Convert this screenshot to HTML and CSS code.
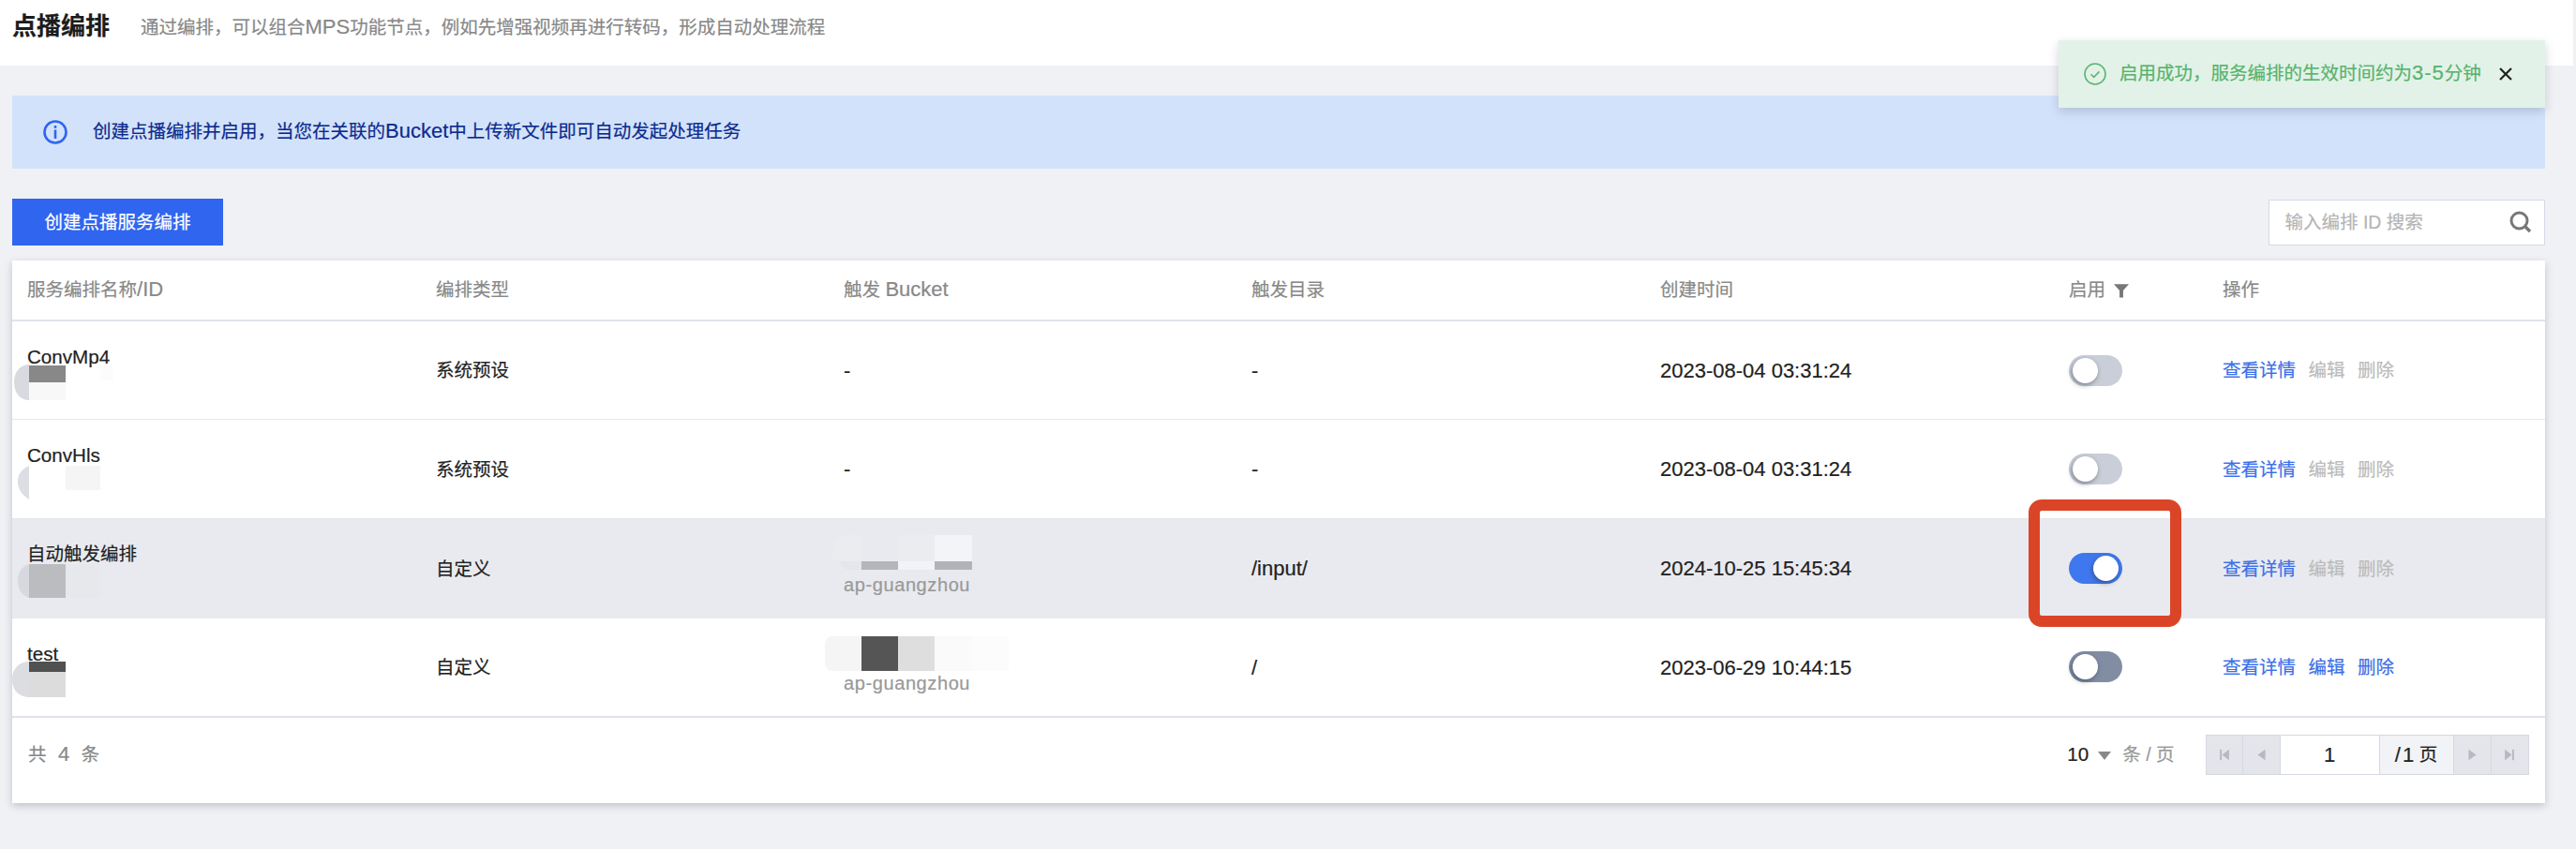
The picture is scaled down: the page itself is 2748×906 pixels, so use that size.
FILE: index.html
```html
<!DOCTYPE html>
<html lang="zh-CN">
<head>
<meta charset="utf-8">
<title>点播编排</title>
<link rel="stylesheet" href="styles.css">
</head>
<body>
<header class="page-head">
  <h1 class="page-title">点播编排</h1>
  <p class="page-desc">通过编排，可以组合<span class="lt">MPS</span>功能节点，例如先增强视频再进行转码，形成自动处理流程</p>
</header>
<div class="toast">
  <svg class="toast-icon" viewBox="0 0 24 24" width="24" height="24"><circle cx="12" cy="12" r="11" fill="none" stroke="#5cb672" stroke-width="1.6"/><path d="M7.5 12.2l3.2 3.2 5.8-6" fill="none" stroke="#5cb672" stroke-width="1.6"/></svg>
  <span class="toast-text">启用成功，服务编排的生效时间约为<span class="lt wide">3-5</span>分钟</span>
  <svg class="toast-close" viewBox="0 0 16 16" width="16" height="16"><path d="M2 2l12 12M14 2L2 14" stroke="#222" stroke-width="2.2" fill="none"/></svg>
</div>
<main class="content">
  <section class="banner">
    <svg viewBox="0 0 26 26" width="26" height="26"><circle cx="13" cy="13" r="11.5" fill="none" stroke="#2f65ef" stroke-width="2.6"/><rect x="11.7" y="6" width="2.6" height="2.8" fill="#2f65ef"/><rect x="11.7" y="10.5" width="2.6" height="9.5" fill="#2f65ef"/></svg>
    <span>创建点播编排并启用，当您在关联的<span class="lt">Bucket</span>中上传新文件即可自动发起处理任务</span>
  </section>
  <div class="toolbar">
    <button class="btn-primary" type="button">创建点播服务编排</button>
    <div class="search">
      <span class="search-ph">输入编排 ID 搜索</span>
      <svg viewBox="0 0 24 24" width="24" height="24"><circle cx="10.5" cy="10.5" r="8.5" fill="none" stroke="#777" stroke-width="3"/><path d="M16 16l6 6" stroke="#777" stroke-width="3.4" fill="none"/></svg>
    </div>
  </div>
  <section class="card">
    <table class="grid">
      <colgroup><col class="c1"><col class="c2"><col class="c3"><col class="c4"><col class="c5"><col class="c6"><col class="c7"></colgroup>
      <thead>
        <tr>
          <th>服务编排名称<span class="lt">/ID</span></th><th>编排类型</th><th>触发 <span class="lt">Bucket</span></th><th>触发目录</th><th>创建时间</th>
          <th>启用 <svg class="filter" viewBox="0 0 14 14" width="16" height="16"><path d="M0 1h14L8.7 7v6.5H5.3V7z" fill="#777"/></svg></th>
          <th>操作</th>
        </tr>
      </thead>
      <tbody>
        <tr>
          <td class="name"><div class="nm latin">ConvMp4</div>
            <svg class="mosaic m1" width="106" height="38"><path d="M16 0H14C4 2 0 10 0 19s4 17 14 19h2z" fill="#d8dae0"/><rect x="16" y="1" width="39" height="18" fill="#888"/><rect x="16" y="19" width="39" height="19" fill="#f8f8f8"/><rect x="92" y="0" width="14" height="17" fill="#fcfcfc"/></svg>
          </td>
          <td>系统预设</td><td class="lat">-</td><td class="lat">-</td><td class="lat">2023-08-04 03:31:24</td>
          <td><span class="sw off"><i></i></span></td>
          <td class="ops"><a>查看详情</a><a class="dis">编辑</a><a class="dis">删除</a></td>
        </tr>
        <tr>
          <td class="name"><div class="nm latin">ConvHls</div>
            <svg class="mosaic m2" width="88" height="36"><path d="M12 0C3 4 0 10 0 17s3 13 12 19z" fill="#dcdee3"/><rect x="51" y="0" width="37" height="26" fill="#f5f5f5"/></svg>
          </td>
          <td>系统预设</td><td class="lat">-</td><td class="lat">-</td><td class="lat">2023-08-04 03:31:24</td>
          <td><span class="sw off"><i></i></span></td>
          <td class="ops"><a>查看详情</a><a class="dis">编辑</a><a class="dis">删除</a></td>
        </tr>
        <tr class="hover">
          <td class="name"><div class="nm">自动触发编排</div>
            <svg class="mosaic m3" width="88" height="36"><path d="M12 0C3 3 0 10 0 18s3 15 12 18z" fill="#d8d9df"/><rect x="12" y="0" width="39" height="36" fill="#bbbcc0"/><rect x="51" y="0" width="37" height="36" fill="#e7e8ec"/></svg>
          </td>
          <td>自定义</td>
          <td class="bucket">
            <svg class="mosaic b3" width="149" height="37"><path d="M31 0H18C6 0 0 8 0 18c0 6 2 10 6 10h25z" fill="#ebecf0"/><path d="M6 28c3 6 7 9 13 9h12v-9z" fill="#e5e6ea"/><rect x="31" y="28" width="39" height="9" fill="#b4b5b9"/><rect x="70" y="0" width="39" height="28" fill="#ebecf0"/><rect x="70" y="28" width="39" height="9" fill="#f2f3f7"/><rect x="109" y="0" width="40" height="28" fill="#f3f4f8"/><rect x="109" y="28" width="40" height="9" fill="#b2b3b7"/></svg>
            <div class="region">ap-guangzhou</div>
          </td>
          <td class="lat">/input/</td><td class="lat">2024-10-25 15:45:34</td>
          <td><span class="sw on"><i></i></span></td>
          <td class="ops"><a>查看详情</a><a class="dis">编辑</a><a class="dis">删除</a></td>
        </tr>
        <tr>
          <td class="name"><div class="nm latin">test</div>
            <svg class="mosaic m4" width="58" height="38"><path d="M18 0H16C4 2 0 10 0 19s4 17 16 19h2z" fill="#dcdde0"/><rect x="18" y="0" width="39" height="11" fill="#505050"/><rect x="18" y="11" width="39" height="27" fill="#dcdcdc"/></svg>
          </td>
          <td>自定义</td>
          <td class="bucket">
            <svg class="mosaic b4" width="196" height="37"><path d="M39 0H10C3 0 0 3 0 10v17c0 7 3 10 10 10h29z" fill="#f5f5f5"/><rect x="39" y="0" width="39" height="37" fill="#555"/><rect x="78" y="0" width="39" height="37" fill="#dedede"/><rect x="117" y="0" width="40" height="37" fill="#fafafa"/><rect x="157" y="0" width="39" height="37" fill="#fcfcfc"/></svg>
            <div class="region">ap-guangzhou</div>
          </td>
          <td class="lat">/</td><td class="lat">2023-06-29 10:44:15</td>
          <td><span class="sw dark"><i></i></span></td>
          <td class="ops"><a>查看详情</a><a>编辑</a><a>删除</a></td>
        </tr>
      </tbody>
    </table>
    <footer class="foot">
      <span class="total">共 <span class="lt">4</span> 条</span>
      <div class="page-size"><b class="size-num">10</b><i class="caret"></i><span>条 / 页</span></div>
      <div class="pager">
        <span class="pg"><svg viewBox="0 0 12 16" width="10" height="13"><rect x="0" y="1" width="2.4" height="14" fill="#b6b9c0"/><path d="M12 1v14L3 8z" fill="#b6b9c0"/></svg></span>
        <span class="pg"><svg viewBox="0 0 10 16" width="9" height="13"><path d="M10 1v14L0 8z" fill="#b6b9c0"/></svg></span>
        <span class="pg-input lt">1</span>
        <span class="pg-total"><span class="lt slash">/ 1</span>&nbsp;页</span>
        <span class="pg"><svg viewBox="0 0 10 16" width="9" height="13"><path d="M0 1v14L10 8z" fill="#b6b9c0"/></svg></span>
        <span class="pg"><svg viewBox="0 0 12 16" width="10" height="13"><rect x="9.6" y="1" width="2.4" height="14" fill="#b6b9c0"/><path d="M0 1v14L9 8z" fill="#b6b9c0"/></svg></span>
      </div>
    </footer>
  </section>
</main>
<div class="callout"></div>
</body>
</html>
```
FILE: styles.css
```css
* { box-sizing: border-box; }
html, body { height: 100%; }
body {
  margin: 0;
  overflow: hidden;
  background: #f0f1f5;
  color: #222;
  font: 19.5px/1.2 "Liberation Sans", "Noto Sans CJK SC", sans-serif;
  -webkit-text-stroke: .2px;
  position: relative;
}
.lt { font-size: 22px; line-height: 1; }
.wide { letter-spacing: 1px; }
.slash { word-spacing: -4px; }
.page-head {
  height: 70px;
  margin-right: 3px;
  padding-left: 13px;
  background: #fff;
  display: flex;
  align-items: flex-start;
  gap: 33px;
}
.page-title { margin: 12px 0 0; font-size: 26px; line-height: 32px; font-weight: 700; color: #1c1c1c; }
.page-desc { margin: 16px 0 0; font-size: 19.5px; line-height: 26px; color: #888; }
.toast {
  position: absolute;
  left: 2196px;
  top: 43px;
  width: 519px;
  height: 72px;
  display: flex;
  align-items: center;
  padding-left: 27px;
  background: #e2f2e8;
  box-shadow: 0 4px 10px rgba(60, 70, 90, .22);
  color: #58b36d;
  z-index: 2;
}
.toast-text { margin-left: 14px; white-space: nowrap; }
.toast-close { margin-left: 18px; }
.content { padding: 32px 33.5px 0 13px; }
.banner {
  height: 78px;
  display: flex;
  align-items: center;
  gap: 27px;
  padding-left: 33px;
  background: #d3e2fb;
  color: #0c2b8c;
}
.toolbar { margin-top: 32px; display: flex; justify-content: space-between; align-items: center; height: 50px; }
.btn-primary {
  width: 225px;
  height: 50px;
  border: 0;
  padding: 2px 0 0;
  background: #2f65ef;
  color: #fff;
  font: inherit;
}
.search {
  width: 295px;
  height: 49px;
  background: #fff;
  border: 1px solid #d5d9e5;
  display: flex;
  align-items: center;
  justify-content: space-between;
  padding: 0 13px 0 17px;
  color: #b5b5b5;
}
.search-ph { padding-top: 2px; }
.card {
  margin-top: 16px;
  height: 579px;
  background: #fff;
  box-shadow: 0 3px 8px rgba(50, 60, 80, .25);
}
.grid { width: 100%; table-layout: fixed; border-collapse: collapse; }
.c1 { width: 436px; } .c2, .c3 { width: 435px; } .c4, .c5 { width: 436px; } .c6 { width: 164px; } .c7 { width: auto; }
th {
  height: 64px;
  padding: 0 16px;
  text-align: left;
  font-weight: 400;
  color: #888;
  border-bottom: 2px solid #dfe3ec;
}
.filter { vertical-align: -2px; margin-left: 4px; }
td {
  height: 105.75px;
  padding: 2px 16px 0;
  vertical-align: middle;
  border-bottom: 1px solid #e5e7ec;
}
tbody tr:last-child td { border-bottom: 2px solid #dfe3ec; }
.hover td { background: #e9eaef; border-bottom-color: #e9eaef; }
td.name, td.bucket { vertical-align: top; }
td.name { padding-top: 27px; }
td.bucket { padding-top: 17px; }
.nm { height: 21px; line-height: 21px; white-space: nowrap; }
.latin { font-size: 20.6px; }
.mosaic { display: block; }
.m1 { margin: -2px 0 0 -14px; }
.m2 { margin: 1px 0 0 -10px; }
.m3 { margin: 0 0 0 -10px; }
.m4 { margin: -2px 0 0 -16px; }
.b3 { margin-left: -12px; }
.b4 { margin: 2px 0 -3px -20px; }
.region { margin-top: 6px; color: #999; line-height: 20px; letter-spacing: .6px; font-size: 20px; }
.lat { font-size: 22px; }
.sw {
  display: block;
  width: 57px;
  height: 33px;
  border-radius: 17px;
  padding: 3px 4px;
  margin-top: -2px;
  background: #c9ced8;
}
.sw i {
  display: block;
  width: 27px;
  height: 27px;
  border-radius: 50%;
  background: #fff;
  box-shadow: -1px 2px 5px rgba(40, 50, 70, .5);
}
.on { background: #3f78ee; padding-left: 26px; }
.dark { background: #818da3; }
.ops { white-space: nowrap; color: #bbb; }
.ops a { color: #3b6fe8; margin-right: 13.5px; }
.ops a.dis { color: #bbb; }
.foot {
  height: 79px;
  display: flex;
  align-items: center;
  padding: 0 17px;
}
.total { color: #888; word-spacing: 7px; }
.page-size { margin-left: auto; display: flex; align-items: center; }
.size-num { font-weight: 400; font-size: 20.6px; }
.caret { margin: 3px 12px 0 10px; border: 7px solid transparent; border-top: 9px solid #888; border-bottom: 0; }
.page-size span { color: #999; }
.pager { margin-left: 33px; display: flex; height: 43px; border: 1px solid #d5d8e2; }
.pg { width: 40px; display: flex; align-items: center; justify-content: center; background: #e3e5ea; border-right: 1px solid #d5d8e2; }
.pg:first-child, .pg:last-child { width: 39px; }
.pg-input { width: 106px; display: flex; align-items: center; justify-content: center; background: #fff; border-right: 1px solid #d5d8e2; }
.pg-total { width: 79px; display: flex; align-items: center; justify-content: center; background: #f2f3f6; border-right: 1px solid #d5d8e2; }
.pg:last-child { border-right: 0; }
.callout {
  position: absolute;
  left: 2164px;
  top: 533px;
  width: 163px;
  height: 136px;
  border: 12px solid #db4527;
  border-radius: 14px;
}
```
